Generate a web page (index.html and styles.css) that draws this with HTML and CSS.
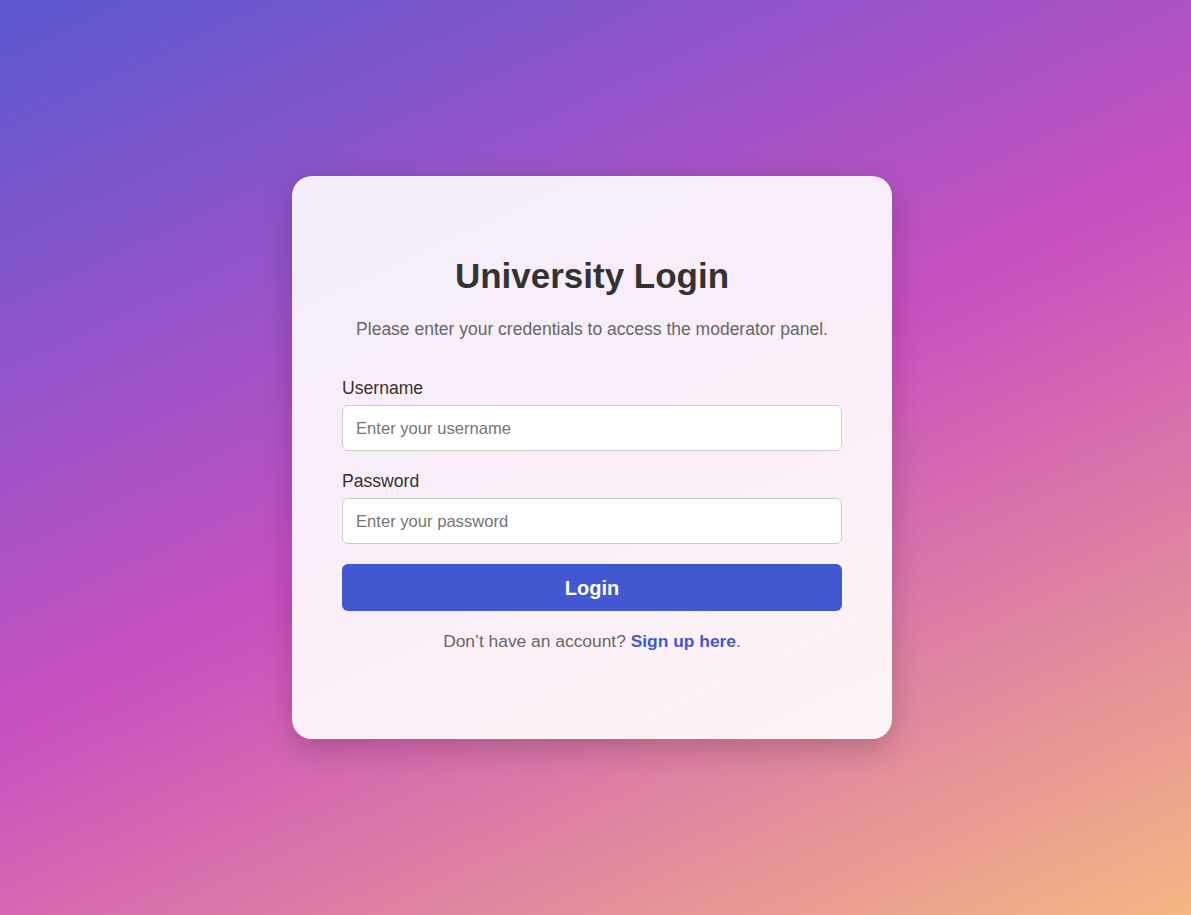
FILE: index.html
```html
<!DOCTYPE html>
<html lang="en">
<head>
<meta charset="utf-8">
<title>University Login</title>
<link rel="stylesheet" href="styles.css">
</head>
<body>
  <main class="card">
    <h1 class="title">University Login</h1>
    <p class="subtitle">Please enter your credentials to access the moderator panel.</p>
    <form class="form">
      <label class="label" for="username">Username</label>
      <input class="input" id="username" type="text" placeholder="Enter your username">
      <label class="label" for="password">Password</label>
      <input class="input" id="password" type="password" placeholder="Enter your password">
      <button class="button" type="button">Login</button>
    </form>
    <p class="footer">Don’t have an account? <a class="link" href="#">Sign up here</a>.</p>
  </main>
</body>
</html>
```

FILE: styles.css
```css
html, body {
  margin: 0;
  height: 100%;
}

body {
  font-family: "Liberation Sans", Arial, sans-serif;
  background: linear-gradient(155deg, #5a58d0 0%, #c850c0 50%, #f6b682 100%);
  display: flex;
  align-items: center;
  justify-content: center;
  padding-right: 7px;
  box-sizing: border-box;
}

.card {
  width: 600px;
  box-sizing: border-box;
  padding: 80px 50px 87px;
  background: rgba(255, 255, 255, 0.9);
  border-radius: 20px;
  box-shadow: 0 10px 30px rgba(0, 0, 0, 0.2);
  text-align: center;
}

.title {
  margin: 0 0 24px;
  font-size: 35px;
  line-height: 39px;
  font-weight: bold;
  color: #333;
}

.subtitle {
  margin: 0 0 39px;
  font-size: 17.5px;
  line-height: 20px;
  color: #666;
}

.form {
  display: flex;
  flex-direction: column;
  text-align: left;
}

.label {
  font-size: 17.6px;
  line-height: 20px;
  color: #333;
  margin-bottom: 7px;
}

.input {
  height: 46px;
  box-sizing: border-box;
  margin: 0 0 20px;
  padding: 1px 13px 0;
  border: 1px solid #ccc;
  border-radius: 6px;
  background: #fff;
  font-family: inherit;
  font-size: 16.6px;
  color: #333;
}

.input::placeholder {
  color: #757575;
}

.button {
  height: 47px;
  padding: 1px 0 0;
  border: none;
  border-radius: 6px;
  background: #4158d0;
  color: #fff;
  font-family: inherit;
  font-size: 20px;
  font-weight: bold;
  cursor: pointer;
}

.footer {
  margin: 20px 0 0;
  font-size: 17.4px;
  line-height: 21px;
  color: #666;
}

.link {
  color: #4158d0;
  font-weight: bold;
  text-decoration: none;
}
```
